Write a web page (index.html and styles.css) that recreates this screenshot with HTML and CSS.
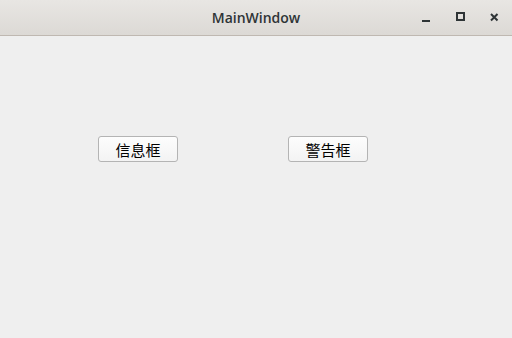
FILE: index.html
```html
<!DOCTYPE html>
<html lang="zh">
<head>
  <meta charset="UTF-8">
  <title>MainWindow</title>
  <link rel="stylesheet" href="styles.css">
</head>
<body>

  <div class="window">
    <!-- title bar -->
    <div class="titlebar">
      <span class="title">MainWindow</span>
      <div class="controls">
        <span class="ctl">
          <svg width="16" height="16" viewBox="0 0 16 16"><rect x="4" y="11" width="8" height="2" fill="#2e3436"/></svg>
        </span>
        <span class="ctl">
          <svg width="16" height="16" viewBox="0 0 16 16"><rect x="5" y="4" width="7" height="7" fill="none" stroke="#2e3436" stroke-width="2"/></svg>
        </span>
        <span class="ctl">
          <svg width="16" height="16" viewBox="0 0 16 16"><path d="M5 5 L11.5 11.5 M11.5 5 L5 11.5" stroke="#2e3436" stroke-width="2"/></svg>
        </span>
      </div>
    </div>

    <!-- content -->
    <div class="content">
      <div class="btn-row">
        <button class="push-btn">信息框</button>
        <button class="push-btn">警告框</button>
      </div>
    </div>
  </div>

</body>
</html>
```

FILE: styles.css
```css
body {
  margin: 0;
  background-color: #efefef;
}

.window {
  width: 512px;
  height: 338px;
  display: flex;
  flex-direction: column;
  background-color: #efefef;
}

.titlebar {
  height: 35px;
  border-bottom: 1px solid #bfb8b1;
  background: linear-gradient(#e8e6e3, #dcd9d5);
  display: flex;
  align-items: center;
  justify-content: center;
  position: relative;
}

.title {
  font-family: "Open Sans", "Noto Sans", sans-serif;
  font-weight: 600;
  font-size: 14px;
  color: #2e3436;
}

.controls {
  position: absolute;
  right: 10px;
  top: 9px;
  display: flex;
  gap: 18px;
}

.ctl {
  width: 16px;
  height: 16px;
  display: block;
}

.ctl svg {
  display: block;
}

.content {
  flex: 1;
  padding: 100px 0 0 98px;
}

.btn-row {
  display: flex;
  gap: 110px;
}

.push-btn {
  width: 80px;
  height: 26px;
  padding: 0;
  font-family: "Noto Sans CJK SC", sans-serif;
  font-size: 15px;
  color: #000;
  background: linear-gradient(#fdfdfd, #f3f3f3);
  border: 1px solid #b4b4b4;
  border-radius: 3px;
}
```
